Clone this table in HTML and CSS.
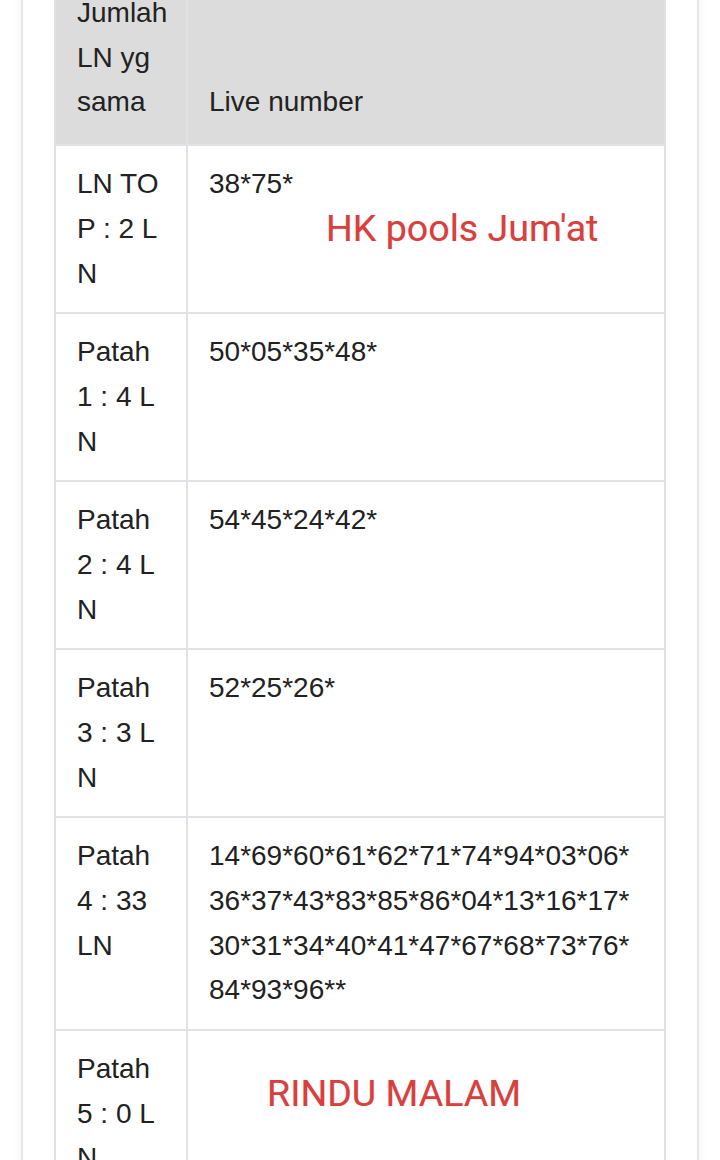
FILE: index.html
```html
<!DOCTYPE html>
<html lang="id">
<head>
<meta charset="utf-8">
<title>Live number</title>
<link rel="stylesheet" href="styles.css">
</head>
<body>
<div class="card">
  <table class="ln-table">
    <colgroup>
      <col class="col-label">
      <col class="col-num">
    </colgroup>
    <thead>
      <tr>
        <th>Jumlah LN yg sama</th>
        <th>Live number</th>
      </tr>
    </thead>
    <tbody>
      <tr>
        <td>LN TOP : 2 LN</td>
        <td>38*75*</td>
      </tr>
      <tr>
        <td>Patah 1 : 4 LN</td>
        <td>50*05*35*48*</td>
      </tr>
      <tr>
        <td>Patah 2 : 4 LN</td>
        <td>54*45*24*42*</td>
      </tr>
      <tr>
        <td>Patah 3 : 3 LN</td>
        <td>52*25*26*</td>
      </tr>
      <tr>
        <td>Patah 4 : 33 LN</td>
        <td>14*<wbr>69*<wbr>60*<wbr>61*<wbr>62*<wbr>71*<wbr>74*<wbr>94*<wbr>03*<wbr>06*<wbr>36*<wbr>37*<wbr>43*<wbr>83*<wbr>85*<wbr>86*<wbr>04*<wbr>13*<wbr>16*<wbr>17*<wbr>30*<wbr>31*<wbr>34*<wbr>40*<wbr>41*<wbr>47*<wbr>67*<wbr>68*<wbr>73*<wbr>76*<wbr>84*<wbr>93*<wbr>96**</td>
      </tr>
      <tr>
        <td>Patah 5 : 0 LN</td>
        <td></td>
      </tr>
    </tbody>
  </table>
</div>
<div class="stamp stamp-hk">HK pools Jum'at</div>
<div class="stamp stamp-rindu">RINDU MALAM</div>
</body>
</html>
```
FILE: styles.css
```css
html, body {
  margin: 0;
  padding: 0;
  background: #ffffff;
}

body {
  font-family: "Liberation Sans", Arial, sans-serif;
  color: #222222;
}

.card {
  margin: -27px 21px 0 21px;
  padding: 0 31px 40px 31px;
  background: #ffffff;
  border-left: 2px solid #e6e6ea;
  border-right: 2px solid #e6e6ea;
  box-shadow: 0 0 10px rgba(0, 0, 0, 0.05);
}

.ln-table {
  width: 100%;
  border-collapse: collapse;
  table-layout: fixed;
  font-size: 28px;
  line-height: 1.6;
}

.col-label {
  width: 132px;
}

.ln-table th,
.ln-table td {
  border: 2px solid #e0e2e6;
  padding: 15.8px 19px 15.8px 21px;
  text-align: left;
}

.ln-table th:first-child,
.ln-table td:first-child {
  word-break: break-all;
  padding-right: 17px;
}

.ln-table th {
  background: #dcdcdc;
  font-weight: normal;
  vertical-align: bottom;
  padding-bottom: 19px;
}

.ln-table td {
  vertical-align: top;
}

.stamp {
  position: absolute;
  font-family: Roboto, "Liberation Sans", sans-serif;
  font-size: 37.6px;
  line-height: 1;
  color: #d8403e;
  white-space: nowrap;
  text-shadow: 0 0 1px rgba(216, 64, 62, 0.35);
}

.stamp-hk {
  left: 326px;
  top: 210px;
}

.stamp-rindu {
  left: 267px;
  top: 1075px;
}
```
